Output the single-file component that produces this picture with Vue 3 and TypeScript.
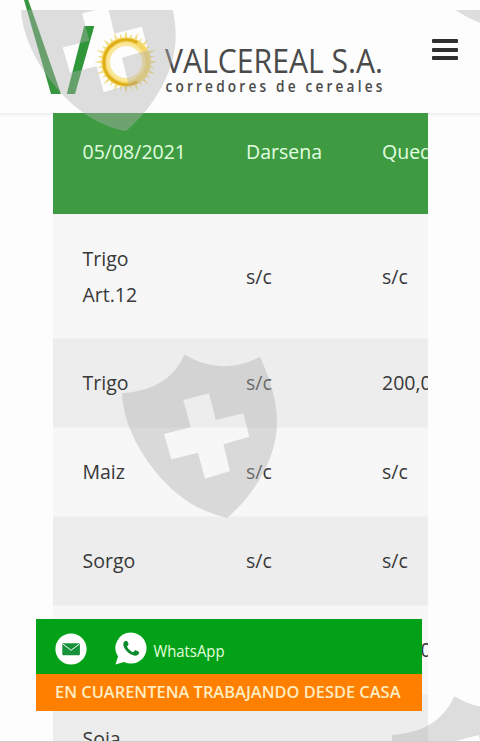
<script setup lang="ts">
interface Row {
  product: string
  darsena: string
  quequen: string
}

const columns: string[] = ['05/08/2021', 'Darsena', 'Quequen']

const rows: Row[] = [
  { product: 'Trigo\nArt.12', darsena: 's/c', quequen: 's/c' },
  { product: 'Trigo', darsena: 's/c', quequen: '200,00' },
  { product: 'Maiz', darsena: 's/c', quequen: 's/c' },
  { product: 'Sorgo', darsena: 's/c', quequen: 's/c' },
  { product: '', darsena: '', quequen: '350,00' },
  { product: 'Soja', darsena: '', quequen: '' },
]

// Offsets of the repeated shield, relative to the central one.
const shields: [number, number][] = [
  [0, 0],
  [-101.3, -386.5],
  [269.8, 341.7],
  [270, -490],
]

// Sun rays alternate between long and short.
const rays: string[] = Array.from({ length: 32 }, (_, i) => {
  const a = (i / 32) * Math.PI * 2
  const outer = i % 2 ? 29 : 32
  const at = (r: number, t: number) =>
    `${(126 + r * Math.cos(t)).toFixed(2)},${(62 + r * Math.sin(t)).toFixed(2)}`
  return `${at(22, a - 0.085)} ${at(outer, a)} ${at(22, a + 0.085)}`
})
</script>

<template>
  <div class="page">
    <header class="header">
      <svg class="logo" width="400" height="113" viewBox="0 0 400 113">
        <path d="M24 0H28.3L61 94H51Z" fill="#399640" />
        <path d="M84.2 26H94.3L75 94H66.8Z" fill="#2f963a" />
        <polygon v-for="(ray, i) in rays" :key="i" :points="ray" fill="#f2da7c" />
        <circle cx="126" cy="62" r="20.5" fill="none" stroke="#fae79a" stroke-width="9" />
        <circle cx="126" cy="62" r="22" fill="none" stroke="#f5d768" stroke-width="5" />
        <path d="M137.3 42.6A22.5 22.5 0 1 0 137.3 81.9" fill="none" stroke="#e0ae18" stroke-width="3" />
        <text class="brand" x="165" y="72.7" textLength="218" lengthAdjust="spacingAndGlyphs">VALCEREAL S.A.</text>
        <text class="tagline" x="165.5" y="92.3" textLength="220" lengthAdjust="spacingAndGlyphs">corredores de cereales</text>
      </svg>
      <button class="menu" aria-label="Menu"><span></span><span></span><span></span></button>
    </header>

    <main class="prices">
      <table>
        <thead>
          <tr><th v-for="c in columns" :key="c">{{ c }}</th></tr>
        </thead>
        <tbody>
          <tr v-for="(row, i) in rows" :key="i">
            <td>{{ row.product }}</td>
            <td>{{ row.darsena }}</td>
            <td>{{ row.quequen }}</td>
          </tr>
        </tbody>
      </table>
    </main>

    <svg class="watermark" width="480" height="742" viewBox="0 0 480 742">
      <defs><clipPath id="sheet"><rect y="10" width="480" height="732" /></clipPath></defs>
      <g clip-path="url(#sheet)">
        <path
          v-for="([x, y], i) in shields"
          :key="i"
          :transform="`translate(${x} ${y})`"
          fill-rule="evenodd"
          d="M122 393.3C152 391 173 380 184.5 354.5C205 367 232 372 260 356.7C268 375 277 397 277 422C277 456 257 492 227.3 517.7C199 512 175 496 155 471C134 445 123 418 122 393.3Z
             M183.3 400L209 393.3L215.7 420L243.3 413.3L249.3 436.7L223.3 444.3L230 471L205 478.7L198 452.7L171.3 459.3L164 434L190.7 427.3Z"
        />
      </g>
    </svg>

    <aside class="contact">
      <div class="channels">
        <svg class="mail" width="32" height="32" viewBox="0 0 32 32">
          <circle cx="16" cy="16" r="15.6" fill="#fff" />
          <rect x="7.3" y="10.2" width="17.6" height="12" rx="1" fill="#17923a" />
          <path d="M7.6 10.8L16.1 17.3L24.6 10.8" fill="none" stroke="#fff" stroke-width="1" />
        </svg>
        <svg class="phone" width="32" height="34" viewBox="0 0 32 34">
          <path d="M16 .6A15.5 15.5 0 1 1 9 29.9L.5 32.4L3 24.6A15.5 15.5 0 0 1 16 .6Z" fill="#fff" />
          <path d="M11.1 8.7C9.4 8.8 8.2 10.7 8.3 12.6C8.5 17.7 15.6 23.6 20.2 23.7C22.2 23.7 24.2 22.4 24.2 20.5C24.3 19.7 21 18.1 20.2 18.2C19.5 18.3 18.7 20.5 17.9 20.3C15.6 19.4 12.8 16.7 12 14.6C11.9 14 13.7 13.1 13.6 12.3C13.5 11.5 12.5 8.7 11.1 8.7Z" fill="#0a8b2b" />
        </svg>
        <svg class="label" width="74" height="26" viewBox="0 0 74 26">
          <text x="0.5" y="18" textLength="71" lengthAdjust="spacingAndGlyphs">WhatsApp</text>
        </svg>
      </div>
      <div class="notice">
        <svg width="350" height="36" viewBox="0 0 350 36">
          <text x="0" y="23.8" textLength="345.5" lengthAdjust="spacingAndGlyphs">EN CUARENTENA TRABAJANDO DESDE CASA</text>
        </svg>
      </div>
    </aside>
  </div>
</template>

<style>
body {
  margin: 0;
  background: #fdfdfd;
}
</style>

<style scoped>
.page {
  position: relative;
  box-sizing: border-box;
  width: 480px;
  height: 742px;
  overflow: hidden;
  background: #fdfdfd;
  border-bottom: 1px solid #cfcfcf;
  font-family: 'Open Sans', 'Noto Sans', sans-serif;
}

.header {
  display: flex;
  justify-content: space-between;
  height: 113px;
  background: #fdfdfd;
  box-shadow: 0 1px 4px rgba(0, 0, 0, 0.09);
}

.logo {
  display: block;
}

.brand {
  font-size: 33.5px;
  fill: #4a4a4a;
}

.tagline {
  font-size: 15.5px;
  font-weight: 600;
  letter-spacing: 3.6px;
  fill: #4a4a4a;
}

.menu {
  display: flex;
  flex-direction: column;
  gap: 4.5px;
  width: 48px;
  padding: 39px 22px 0 0;
  border: 0;
  background: none;
}

.menu span {
  width: 26px;
  height: 4px;
  border-radius: 1px;
  background: #2f2f2f;
}

.prices {
  position: relative;
  width: 375px;
  height: 629px;
  margin-left: 53px;
  overflow: hidden;
}

table {
  width: 480px;
  table-layout: fixed;
  border-spacing: 0;
  font-size: 19.5px;
  line-height: 36px;
  color: #383838;
}

th,
td {
  box-sizing: border-box;
  padding: 26px 29.5px;
  text-align: left;
  font-weight: 400;
  white-space: pre-line;
}

th {
  height: 101px;
  padding-top: 21px;
  vertical-align: top;
  background: #3f9b42;
  color: #e2ffe0;
}

th:nth-child(1) {
  width: 163.5px;
}

th:nth-child(2) {
  width: 136px;
}

td {
  height: 89px;
  border-top: 1px solid #f2f2f2;
  background: #ededed;
}

tbody tr:nth-child(odd) td {
  background: #f7f7f7;
}

tbody tr:first-child td {
  padding-bottom: 25px;
}

.watermark {
  position: absolute;
  inset: 0;
  fill: #b0b0b0;
  opacity: 0.41;
}

.contact {
  position: absolute;
  left: 36px;
  top: 619px;
  width: 386px;
}

.channels {
  display: flex;
  align-items: center;
  height: 55px;
  padding-left: 19.3px;
  background: #02a118;
}

.mail {
  margin-top: 5px;
}

.phone {
  margin: 5px 0 0 27.5px;
}

.label {
  margin: 10px 0 0 6.5px;
  font-size: 15.5px;
  fill: #e4ffdc;
}

.notice {
  height: 37px;
  padding-left: 19px;
  background: #ff8000;
  font-size: 17px;
  font-weight: 600;
  fill: #ffecc0;
}
</style>
